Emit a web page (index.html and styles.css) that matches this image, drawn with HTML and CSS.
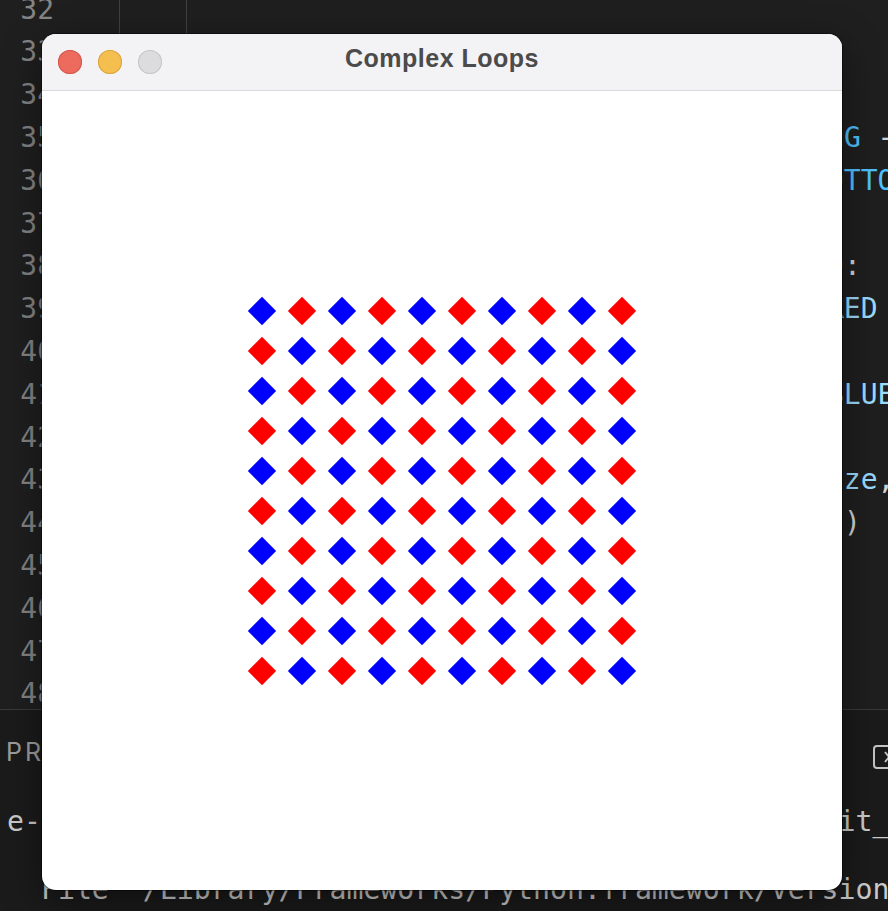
FILE: index.html
```html
<!DOCTYPE html>
<html>
<head>
<meta charset="utf-8">
<title>Complex Loops</title>
<link rel="stylesheet" href="styles.css">
</head>
<body>
<div class="ide">
  <div class="editor">
    <div class="gutter">
      <div class="ln">32</div><div class="ln">33</div><div class="ln">34</div><div class="ln">35</div><div class="ln">36</div><div class="ln">37</div><div class="ln">38</div><div class="ln">39</div><div class="ln">40</div><div class="ln">41</div><div class="ln">42</div><div class="ln">43</div><div class="ln">44</div><div class="ln">45</div><div class="ln">46</div><div class="ln">47</div><div class="ln">48</div>
    </div>
    <div class="code">
      <div class="line"><span class="ig"></span><span class="ig"></span></div>
      <div class="line"><span class="ig"></span><span class="ig"></span><span class="kw">for</span> <span class="var">row_i</span> <span class="kw">in</span> <span class="fn">range</span>(<span class="const">ROWS</span>):</div>
      <div class="line"><span class="ig"></span><span class="ig"></span><span class="ig"></span><span class="kw">for</span> <span class="var">col_i</span> <span class="kw">in</span> <span class="fn">range</span>(<span class="const">COLS</span>):</div>
      <div class="line"><span class="ig"></span><span class="ig"></span><span class="ig"></span><span class="ig"></span><span class="var">x</span> = <span class="const">LEFT</span> + <span class="var">col_i</span> * <span class="const">H_SPACING</span> - <span class="const">HALF</span></div>
      <div class="line"><span class="ig"></span><span class="ig"></span><span class="ig"></span><span class="ig"></span><span class="var">y</span> = <span class="var">row_i</span> * <span class="const">ROW_HEIGHT</span> + <span class="const">BOTTOM</span></div>
      <div class="line"><span class="ig"></span><span class="ig"></span><span class="ig"></span><span class="ig"></span></div>
      <div class="line"><span class="ig"></span><span class="ig"></span><span class="ig"></span><span class="ig"></span><span class="kw">if</span> (<span class="var">row_i</span> + <span class="var">col_i</span>) % <span class="num">2</span> == <span class="num">0</span>:</div>
      <div class="line"><span class="ig"></span><span class="ig"></span><span class="ig"></span><span class="ig"></span><span class="ig"></span><span class="var">colour</span> = <span class="cls">arcade</span>.<span class="var">color</span>.<span class="var">RED</span></div>
      <div class="line"><span class="ig"></span><span class="ig"></span><span class="ig"></span><span class="ig"></span><span class="kw">else</span>:</div>
      <div class="line"><span class="ig"></span><span class="ig"></span><span class="ig"></span><span class="ig"></span><span class="ig"></span><span class="var">colour</span> = <span class="cls">arcade</span>.<span class="var">color</span>.<span class="var">BLUE</span></div>
      <div class="line"><span class="ig"></span><span class="ig"></span><span class="ig"></span><span class="ig"></span></div>
      <div class="line"><span class="ig"></span><span class="ig"></span><span class="ig"></span><span class="ig"></span><span class="fn">draw_diamond</span>(<span class="var">xpos</span>, <span class="var">ypos</span>, <span class="var">size</span>,</div>
      <div class="line"><span class="ig"></span><span class="ig"></span><span class="ig"></span><span class="ig"></span>             <span class="var">colour</span>, <span class="var">rot</span>=<span class="num">45</span>)</div>
      <div class="line"></div>
      <div class="line"><span class="kw">def</span> <span class="fn">main</span>():</div>
      <div class="line"><span class="ig"></span><span class="var">window</span> = <span class="cls">arcade</span>.<span class="cls">Window</span>(<span class="const">W</span>, <span class="const">H</span>, <span class="const">TITLE</span>)</div>
      <div class="line"><span class="ig"></span><span class="cls">arcade</span>.<span class="fn">set_background_color</span>(<span class="const">WHITE</span>)</div>
    </div>
  </div>
  <div class="panel">
    <div class="panel-head">
      <div class="tabs">
        <span class="tab">PROBLEMS</span>
        <span class="tab">OUTPUT</span>
        <span class="tab">DEBUG CONSOLE</span>
        <span class="tab">TERMINAL</span>
      </div>
      <div class="actions">
        <svg class="kill" width="30" height="24" viewBox="0 0 30 24"><rect x="1" y="1" width="28" height="22" rx="3" fill="none" stroke="#c5c5c5" stroke-width="2"/><path d="M12 7 L20 17 M20 7 L12 17" stroke="#c5c5c5" stroke-width="2" fill="none"/></svg>
      </div>
    </div>
    <div class="term">
      <div class="tline">e-learning % /usr/local/bin/python3 /Users/max/unit_4/complex_loops.py</div>
      <div class="tline">  File "complex_loops.py", line 56</div>
      <div class="tline">  File "/Library/Frameworks/Python.framework/Versions/3.12/lib/python3.12/site-packages/arcade/window.py"</div>
      <div class="tline">    self._run()</div>
    </div>
  </div>
</div>

<div class="window">
  <div class="titlebar">
    <div class="lights">
      <span class="light red"></span>
      <span class="light yellow"></span>
      <span class="light gray"></span>
    </div>
    <div class="title">Complex Loops</div>
    <div></div>
  </div>
  <div class="canvas">
    <div class="grid">
      <div class="d b"></div><div class="d r"></div><div class="d b"></div><div class="d r"></div><div class="d b"></div><div class="d r"></div><div class="d b"></div><div class="d r"></div><div class="d b"></div><div class="d r"></div>
      <div class="d r"></div><div class="d b"></div><div class="d r"></div><div class="d b"></div><div class="d r"></div><div class="d b"></div><div class="d r"></div><div class="d b"></div><div class="d r"></div><div class="d b"></div>
      <div class="d b"></div><div class="d r"></div><div class="d b"></div><div class="d r"></div><div class="d b"></div><div class="d r"></div><div class="d b"></div><div class="d r"></div><div class="d b"></div><div class="d r"></div>
      <div class="d r"></div><div class="d b"></div><div class="d r"></div><div class="d b"></div><div class="d r"></div><div class="d b"></div><div class="d r"></div><div class="d b"></div><div class="d r"></div><div class="d b"></div>
      <div class="d b"></div><div class="d r"></div><div class="d b"></div><div class="d r"></div><div class="d b"></div><div class="d r"></div><div class="d b"></div><div class="d r"></div><div class="d b"></div><div class="d r"></div>
      <div class="d r"></div><div class="d b"></div><div class="d r"></div><div class="d b"></div><div class="d r"></div><div class="d b"></div><div class="d r"></div><div class="d b"></div><div class="d r"></div><div class="d b"></div>
      <div class="d b"></div><div class="d r"></div><div class="d b"></div><div class="d r"></div><div class="d b"></div><div class="d r"></div><div class="d b"></div><div class="d r"></div><div class="d b"></div><div class="d r"></div>
      <div class="d r"></div><div class="d b"></div><div class="d r"></div><div class="d b"></div><div class="d r"></div><div class="d b"></div><div class="d r"></div><div class="d b"></div><div class="d r"></div><div class="d b"></div>
      <div class="d b"></div><div class="d r"></div><div class="d b"></div><div class="d r"></div><div class="d b"></div><div class="d r"></div><div class="d b"></div><div class="d r"></div><div class="d b"></div><div class="d r"></div>
      <div class="d r"></div><div class="d b"></div><div class="d r"></div><div class="d b"></div><div class="d r"></div><div class="d b"></div><div class="d r"></div><div class="d b"></div><div class="d r"></div><div class="d b"></div>
    </div>
  </div>
</div>
</body>
</html>
```

FILE: styles.css
```css
* { box-sizing: border-box; }

html, body {
  margin: 0;
  padding: 0;
}

body {
  background: #1e1e1e;
  width: 888px;
  height: 911px;
  overflow: hidden;
  position: relative;
  font-family: "DejaVu Sans Mono", "Liberation Mono", monospace;
}

.ide {
  width: 888px;
  height: 911px;
  display: flex;
  flex-direction: column;
}

/* ---------- editor ---------- */
.editor {
  height: 709px;
  flex: none;
  display: flex;
  overflow: hidden;
  background: #1f1f1f;
  font-size: 28px;
  line-height: 42.8px;
}

.gutter {
  width: 54px;
  flex: none;
  margin-top: -11.4px;
  text-align: right;
  color: #858585;
}

.ln { height: 42.8px; }

.code {
  flex: none;
  margin-left: 65px;
  margin-top: -11.4px;
  color: #d4d4d4;
}

.line {
  height: 42.8px;
  white-space: pre;
}

.ig {
  display: inline-block;
  width: 4ch;
  height: 42.8px;
  vertical-align: top;
  box-shadow: inset 1px 0 0 #404040;
}

.kw { color: #c586c0; }
.fn { color: #dcdcaa; }
.var { color: #9cdcfe; }
.const { color: #4fc1ff; }
.num { color: #b5cea8; }
.cls { color: #4ec9b0; }
.str { color: #ce9178; }

/* ---------- panel ---------- */
.panel {
  flex: 1;
  background: #1b1b1b;
  border-top: 1px solid #3a3a3a;
  overflow: hidden;
}

.panel-head {
  height: 95px;
  padding: 0 0 11px 6px;
  display: flex;
  align-items: center;
  justify-content: space-between;
}

.tabs {
  display: flex;
  gap: 40px;
  font-family: "Inter", "Noto Sans", sans-serif;
  font-size: 25px;
  line-height: 30px;
  color: #9d9d9d;
  white-space: nowrap;
}

.tab { letter-spacing: 3px; }

.actions {
  margin-top: 9px;
  margin-right: -15px;
  display: flex;
}

.kill { display: block; }

.term {
  padding-left: 7px;
  font-size: 28.2px;
  line-height: 34px;
  color: #cccccc;
}

.tline {
  height: 34px;
  white-space: pre;
}

/* ---------- app window ---------- */
.window {
  position: absolute;
  left: 42px;
  top: 34px;
  width: 800px;
  height: 856px;
  border-radius: 14px;
  overflow: hidden;
  background: #ffffff;
  display: flex;
  flex-direction: column;
  box-shadow: 0 0 0 1px rgba(0, 0, 0, 0.45), 0 12px 40px rgba(0, 0, 0, 0.45);
}

.titlebar {
  height: 57px;
  flex: none;
  background: #f3f2f5;
  border-bottom: 1px solid #d9d8da;
  display: grid;
  grid-template-columns: 1fr auto 1fr;
  align-items: center;
}

.lights {
  display: flex;
  gap: 16px;
  padding-left: 16px;
}

.light {
  width: 24px;
  height: 24px;
  border-radius: 50%;
  display: block;
}

.light.red { background: #ed6a5e; box-shadow: inset 0 0 0 1px #d4574c; }
.light.yellow { background: #f5bf4f; box-shadow: inset 0 0 0 1px #d9a441; }
.light.gray { background: #dcdbdd; box-shadow: inset 0 0 0 1px #c6c5c8; }

.title {
  font-family: "Liberation Sans", Arial, sans-serif;
  font-weight: bold;
  font-size: 25px;
  letter-spacing: 0.5px;
  line-height: 25px;
  padding-bottom: 8px;
  color: #4b4b4b;
  white-space: nowrap;
}

.canvas {
  flex: 1;
  display: flex;
  align-items: center;
  justify-content: center;
}

.grid {
  display: grid;
  grid-template-columns: repeat(10, 40px);
  grid-auto-rows: 40px;
  place-items: center;
}

.d {
  width: 20px;
  height: 20px;
  transform: rotate(45deg);
}

.d.b { background: #0000ff; }
.d.r { background: #ff0000; }
```
